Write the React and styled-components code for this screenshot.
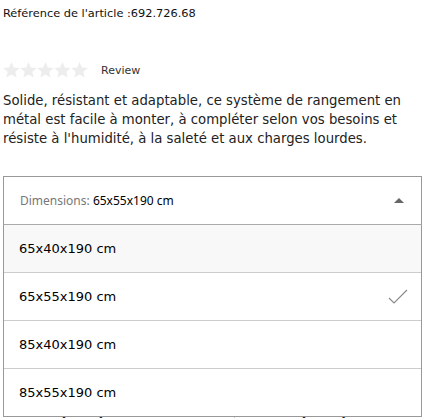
import React from 'react';
import styled, { createGlobalStyle } from 'styled-components';

const GlobalStyle = createGlobalStyle`
  html, body {
    margin: 0;
    background: #fff;
    font-family: "DejaVu Sans", Verdana, sans-serif;
    color: #111;
  }
`;

const Page = styled.div`
  padding: 0 1px 0 3px;
  width: 423px;
  height: 418px;
  overflow: hidden;
  box-sizing: border-box;
`;

const Reference = styled.div`
  font-size: 11.35px;
  line-height: 14px;
  padding-top: 6px;
  color: #111;
`;

const Rating = styled.div`
  display: flex;
  align-items: center;
  gap: 13px;
  margin-top: 42px;
  height: 16px;
`;

const Stars = styled.div`
  display: flex;
`;

const ReviewLink = styled.span`
  font-size: 11px;
  color: #333;
`;

const Description = styled.p`
  margin: 13px 0 0;
  font-size: 13.25px;
  line-height: 19px;
  color: #222;
`;

const SelectWrap = styled.div`
  position: relative;
  margin-top: 28px;
`;

const SelectHeader = styled.div`
  display: flex;
  align-items: center;
  justify-content: space-between;
  height: 47px;
  padding: 0 17px 0 16px;
  border: 1px solid #999;
  border-bottom-color: #aaa;
  font-family: "Noto Sans", "Open Sans", sans-serif;
  font-size: 12px;
`;

const Label = styled.span`
  color: #777;
`;

const Value = styled.span`
  color: #000;
`;

const Caret = styled.span`
  width: 0;
  height: 0;
  border-left: 5px solid transparent;
  border-right: 5px solid transparent;
  border-bottom: 5px solid #666;
`;

const Below = styled.div`
  display: flex;
  margin-top: 190px;
  font-size: 13px;
  font-weight: bold;
  color: #222;
`;

const BelowItem = styled.span`
  text-decoration: underline;
  padding-right: ${p => (p.$divider ? '55px' : '0')};
  margin-right: ${p => (p.$divider ? '9px' : '0')};
  border-right: ${p => (p.$divider ? '1px solid #ccc' : 'none')};
`;

const OptionList = styled.ul`
  position: absolute;
  top: 49px;
  left: 0;
  right: 0;
  z-index: 2;
  margin: 0;
  padding: 0;
  list-style: none;
  background: #fff;
  border: 1px solid #999;
  border-top: none;
`;

const Option = styled.li`
  display: flex;
  align-items: center;
  justify-content: space-between;
  height: 47px;
  padding: 0 13px 0 15px;
  font-size: 13px;
  color: #000;
  background: ${p => (p.$hover ? '#f8f8f8' : '#fff')};
  border-bottom: ${p => (p.$last ? 'none' : '1px solid #ccc')};
`;

const Star = () => (
  <svg width="17" height="16" viewBox="1 1.5 22 21">
    <path
      d="M12 1.5l3.1 7.1 7.7.7-5.8 5.1 1.7 7.6L12 18l-6.7 4 1.7-7.6-5.8-5.1 7.7-.7z"
      fill="#ededed"
    />
  </svg>
);

const Check = () => (
  <svg width="20" height="16" viewBox="0 0 20 16">
    <path d="M1 9l5 5L19 1" fill="none" stroke="#888" strokeWidth="1.1" />
  </svg>
);

const options = ['65x40x190 cm', '65x55x190 cm', '85x40x190 cm', '85x55x190 cm'];

export default function App() {
  return (
    <>
      <GlobalStyle />
      <Page>
        <Reference>Référence de l'article :692.726.68</Reference>
        <Rating>
          <Stars>
            {[0, 1, 2, 3, 4].map(i => (
              <Star key={i} />
            ))}
          </Stars>
          <ReviewLink>Review</ReviewLink>
        </Rating>
        <Description>
          Solide, résistant et adaptable, ce système de rangement en métal est facile à monter,
          à compléter selon vos besoins et résiste à l'humidité, à la saleté et aux charges lourdes.
        </Description>
        <SelectWrap>
          <SelectHeader>
            <span>
              <Label>Dimensions: </Label>
              <Value>65x55x190 cm</Value>
            </span>
            <Caret />
          </SelectHeader>
          <OptionList>
            {options.map((o, i) => (
              <Option key={o} $hover={i === 0} $last={i === options.length - 1}>
                {o}
                {i === 1 && <Check />}
              </Option>
            ))}
          </OptionList>
          <Below>
            <BelowItem $divider>Accessoires de montage</BelowItem>
            <BelowItem>Instructions de montage</BelowItem>
          </Below>
        </SelectWrap>
      </Page>
    </>
  );
}
